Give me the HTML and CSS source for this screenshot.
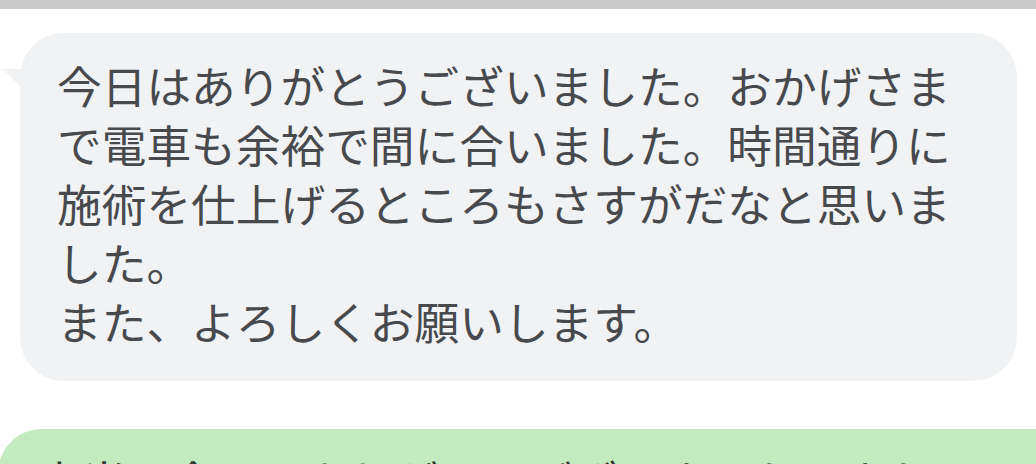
FILE: index.html
```html
<!DOCTYPE html>
<html lang="ja">
<head>
    <meta charset="UTF-8">
    <meta name="viewport" content="width=device-width, initial-scale=1.0">
    <title>トーク</title>
    <link rel="stylesheet" href="styles.css">
</head>
<body>
    <div class="top-bar"></div>

    <!-- メッセージ一覧 -->
    <main class="chat">
        <div class="bubble bubble-in">
            <p>今日はありがとうございました。おかげさまで電車も余裕で間に合いました。時間通りに施術を仕上げるところもさすがだなと思いました。<br>また、よろしくお願いします。</p>
        </div>

        <div class="bubble bubble-out">
            <p>本当に今日はありがとうございました。またのご来店をお待ちしております。</p>
        </div>
    </main>
</body>
</html>
```

FILE: styles.css
```css
/* 全体 */
body {
    font-family: "Noto Sans CJK JP", "Noto Sans", sans-serif;
    background-color: #fff;
    color: #47494d;
    margin: 0;
    padding: 0;
    overflow: hidden;
}

.top-bar {
    height: 9px;
    background-color: #c9c9c9;
}

.chat {
    display: flex;
    flex-direction: column;
    gap: 48px;
    padding-top: 24px;
}

.bubble {
    position: relative;
    box-sizing: border-box;
    border-radius: 44px;
}

.bubble p {
    margin: 0;
    font-size: 44.7px;
    line-height: 59px;
}

/* 受信 */
.bubble-in {
    width: 997px;
    margin-left: 20px;
    padding: 22px 40px 31px 37px;
    background-color: #f0f2f4;
}

.bubble-in::before {
    content: "";
    position: absolute;
    left: -17px;
    top: 36px;
    border-right: 20px solid #f0f2f4;
    border-bottom: 20px solid transparent;
}

/* 送信 */
.bubble-out {
    width: 1100px;
    margin-left: -2px;
    padding: 21px 100px 30px 39px;
    background-color: #c4eabf;
    color: #2f3a2f;
}
```
